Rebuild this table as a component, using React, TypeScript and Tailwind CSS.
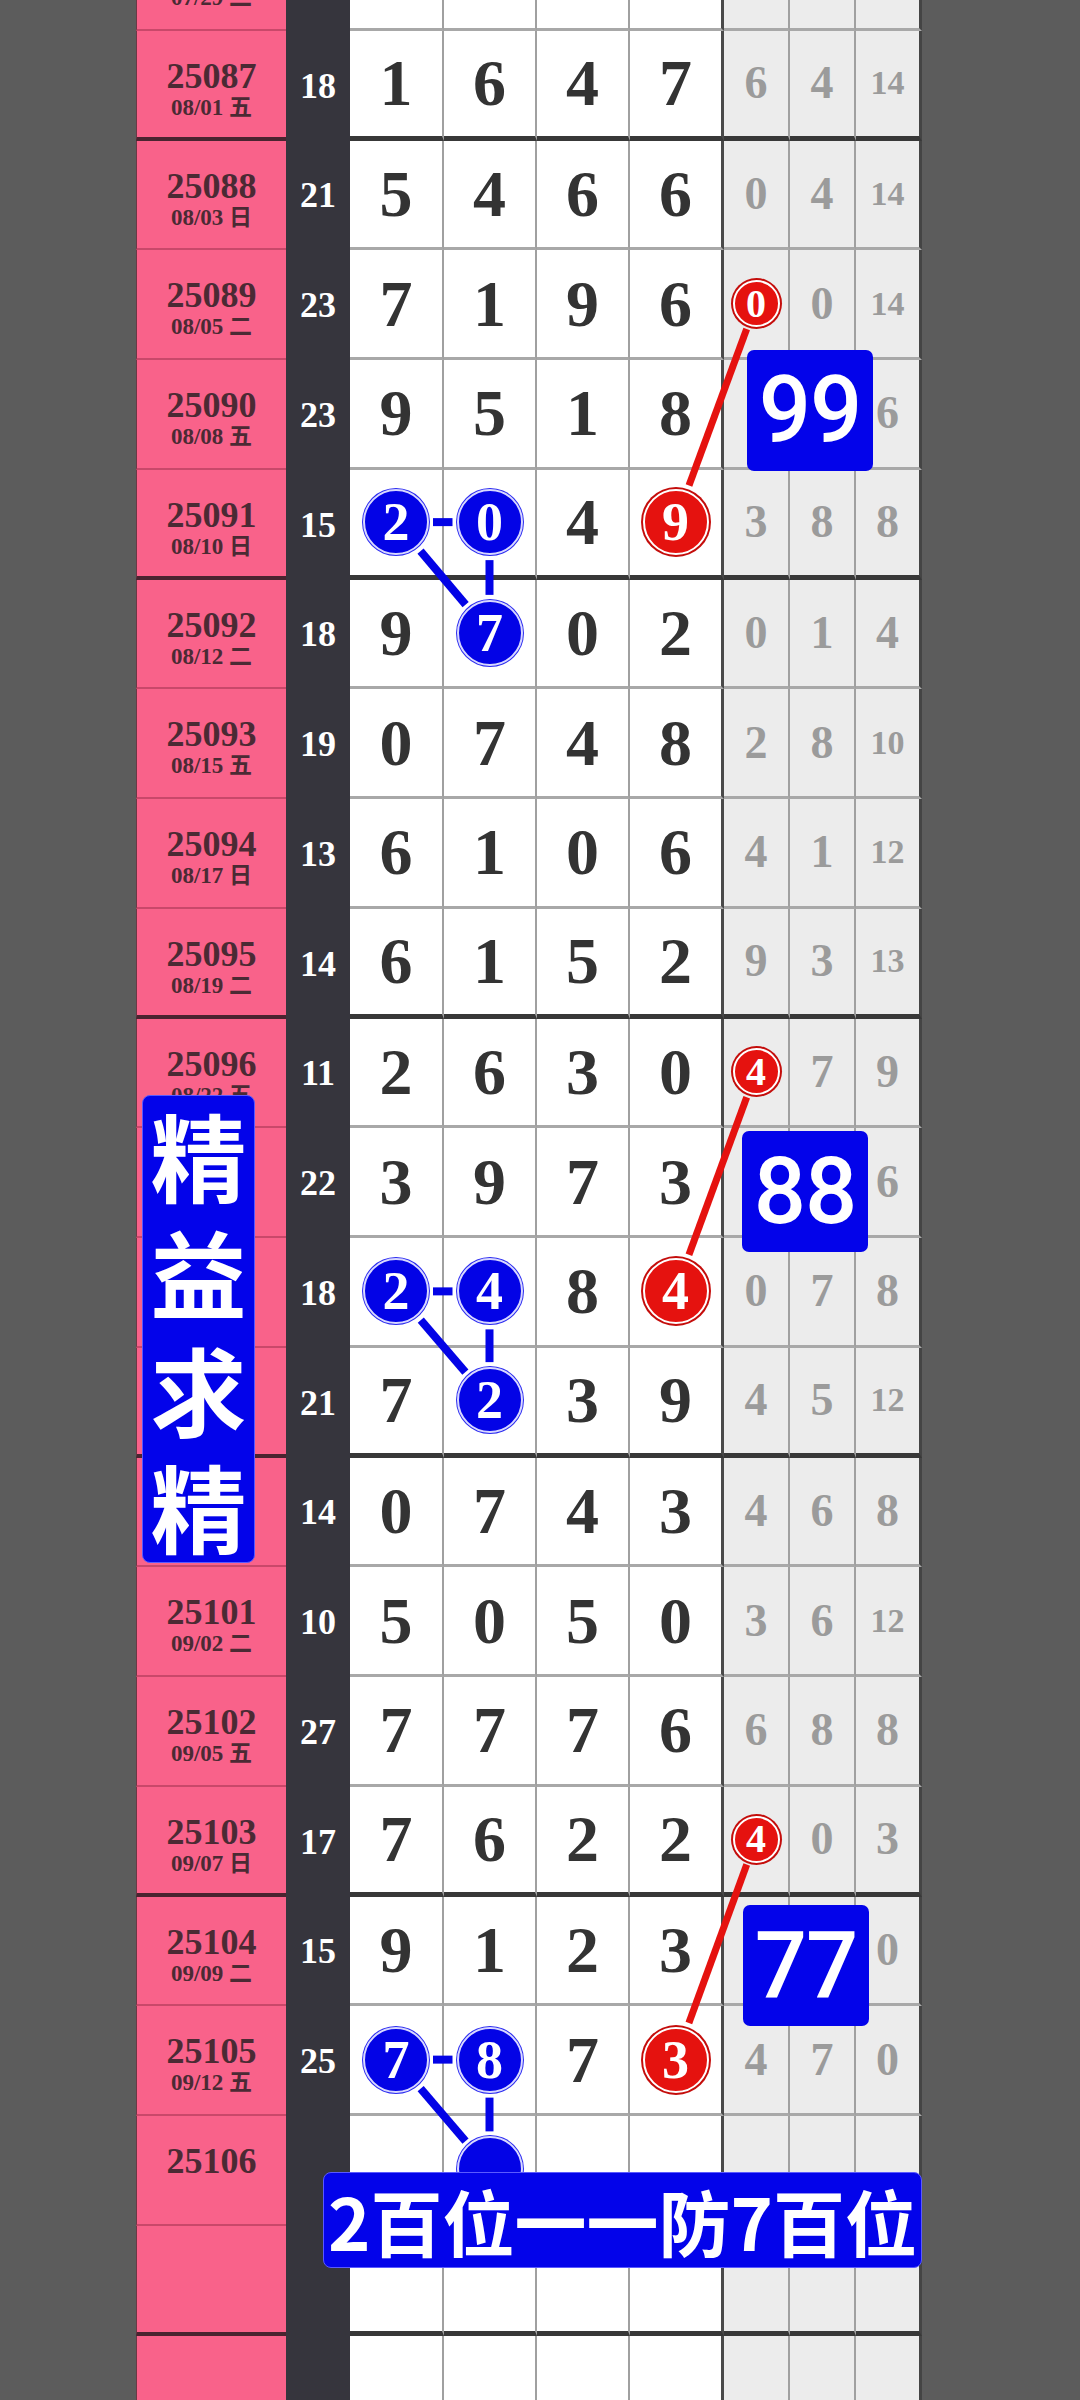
import React from "react";

type Row = {
  id: string;
  date: string;
  sum: string;
  main: string[];
  side: string[];
};

// "b" = 蓝圈, "r" = 红圈, 后面跟数字
// 25097-25100 的期号被“精益求精”挡住，截图里看不到，这里留空
const ROWS: Row[] = [
  { id: "25086", date: "07/29 二", sum: "", main: ["", "", "", ""], side: ["", "", ""] },
  { id: "25087", date: "08/01 五", sum: "18", main: ["1", "6", "4", "7"], side: ["6", "4", "14"] },
  { id: "25088", date: "08/03 日", sum: "21", main: ["5", "4", "6", "6"], side: ["0", "4", "14"] },
  { id: "25089", date: "08/05 二", sum: "23", main: ["7", "1", "9", "6"], side: ["r0", "0", "14"] },
  { id: "25090", date: "08/08 五", sum: "23", main: ["9", "5", "1", "8"], side: ["", "", "6"] },
  { id: "25091", date: "08/10 日", sum: "15", main: ["b2", "b0", "4", "r9"], side: ["3", "8", "8"] },
  { id: "25092", date: "08/12 二", sum: "18", main: ["9", "b7", "0", "2"], side: ["0", "1", "4"] },
  { id: "25093", date: "08/15 五", sum: "19", main: ["0", "7", "4", "8"], side: ["2", "8", "10"] },
  { id: "25094", date: "08/17 日", sum: "13", main: ["6", "1", "0", "6"], side: ["4", "1", "12"] },
  { id: "25095", date: "08/19 二", sum: "14", main: ["6", "1", "5", "2"], side: ["9", "3", "13"] },
  { id: "25096", date: "08/22 五", sum: "11", main: ["2", "6", "3", "0"], side: ["r4", "7", "9"] },
  { id: "", date: "", sum: "22", main: ["3", "9", "7", "3"], side: ["", "", "6"] },
  { id: "", date: "", sum: "18", main: ["b2", "b4", "8", "r4"], side: ["0", "7", "8"] },
  { id: "", date: "", sum: "21", main: ["7", "b2", "3", "9"], side: ["4", "5", "12"] },
  { id: "", date: "", sum: "14", main: ["0", "7", "4", "3"], side: ["4", "6", "8"] },
  { id: "25101", date: "09/02 二", sum: "10", main: ["5", "0", "5", "0"], side: ["3", "6", "12"] },
  { id: "25102", date: "09/05 五", sum: "27", main: ["7", "7", "7", "6"], side: ["6", "8", "8"] },
  { id: "25103", date: "09/07 日", sum: "17", main: ["7", "6", "2", "2"], side: ["r4", "0", "3"] },
  { id: "25104", date: "09/09 二", sum: "15", main: ["9", "1", "2", "3"], side: ["", "", "0"] },
  { id: "25105", date: "09/12 五", sum: "25", main: ["b7", "b8", "7", "r3"], side: ["4", "7", "0"] },
  { id: "25106", date: "", sum: "", main: ["", "b", "", ""], side: ["", "", ""] },
  { id: "", date: "", sum: "", main: ["", "", "", ""], side: ["", "", ""] },
  { id: "", date: "", sum: "", main: ["", "", "", ""], side: ["", "", ""] },
];

const SERIF = "font-['Liberation_Serif','Noto_Sans_CJK_SC',serif] font-bold";

// 行的几何：顶部偏移 -79，行高 109.75，每 4 行一条粗线
const TOP = -79;
const RH = 109.75;
const thick = (k: number) => k % 4 === 1;
const rowCenter = (k: number) => TOP + k * RH + (thick(k) ? 52.375 : 53.375);
const COL = [396, 489.5, 583, 675.5];
const SIDE1 = 756;

function parse(v: string) {
  if (v[0] === "b" || v[0] === "r") return { mark: v[0], text: v.slice(1) };
  return { mark: "", text: v };
}

function Ball({ mark, text, small }: { mark: string; text: string; small?: boolean }) {
  const size = small ? "h-[47px] w-[47px] text-[40px]" : "h-[66px] w-[66px] text-[54px]";
  const color =
    mark === "b"
      ? "bg-[#0303e6] border-2 border-[#d8d8ff] shadow-[0_0_0_1px_#2a2af0]"
      : "bg-[#e5120f] border-2 border-white shadow-[0_0_0_2px_#c40d0b]";
  return (
    <div className={`${size} ${color} flex items-center justify-center rounded-full text-white leading-none ${SERIF}`}>
      {text}
    </div>
  );
}

function TableRow({ row, k }: { row: Row; k: number }) {
  const t = thick(k);
  const pinkB = t ? "border-b-[4px] border-b-[#4a2430]" : "border-b-2 border-b-[#c9486a]";
  const cellB = t ? "border-b-[5px] border-b-[#383838]" : "border-b-[3px] border-b-[#a8a8a8]";
  const widths = ["w-[94px]", "w-[93px]", "w-[93px]", "w-[94px]"];

  return (
    <div className="flex h-[109.75px]">
      <div
        className={`flex w-[150px] flex-col items-center border-l border-l-[#6a3a46] bg-[#f9628a] pt-[27px] text-[#4b2a34] ${pinkB} ${SERIF}`}
      >
        <div className="text-[36px] leading-[36px]">{row.id}</div>
        {row.date ? <div className="mt-[1px] text-[23px] leading-[26px]">{row.date}</div> : null}
      </div>
      <div className={`flex w-[64px] items-center justify-center bg-[#36353d] text-[36px] leading-none text-white ${SERIF}`}>
        {row.sum}
      </div>
      {row.main.map((v, i) => {
        const { mark, text } = parse(v);
        const right = i === 3 ? "border-r-[3px] border-r-[#4a4a4a]" : "border-r-2 border-r-[#a0a0a0]";
        return (
          <div key={i} className={`flex ${widths[i]} items-center justify-center bg-white ${right} ${cellB}`}>
            {mark ? (
              <Ball mark={mark} text={text} />
            ) : (
              <span className={`text-[66px] leading-none text-[#333333] ${SERIF}`}>{text}</span>
            )}
          </div>
        );
      })}
      {row.side.map((v, i) => {
        const { mark, text } = parse(v);
        const right = i === 2 ? "border-r-[3px] border-r-[#444444]" : "border-r-2 border-r-[#a0a0a0]";
        const size = text.length > 1 ? "text-[34px]" : "text-[46px]";
        return (
          <div key={i} className={`flex w-[66px] items-center justify-center bg-[#ececec] ${right} ${cellB}`}>
            {mark ? (
              <Ball mark={mark} text={text} small />
            ) : (
              <span className={`${size} leading-none text-[#9b9b9b] ${SERIF}`}>{text}</span>
            )}
          </div>
        );
      })}
    </div>
  );
}

function seg(x1: number, y1: number, r1: number, x2: number, y2: number, r2: number) {
  const dx = x2 - x1;
  const dy = y2 - y1;
  const d = Math.hypot(dx, dy);
  const ux = dx / d;
  const uy = dy / d;
  return { x1: x1 + ux * r1, y1: y1 + uy * r1, x2: x2 - ux * r2, y2: y2 - uy * r2 };
}

function Links() {
  // 每组：蓝圈在第 k 行（百位/十位），下一行十位；红线从上两行的小红圈到个位
  const groups = [5, 12, 19];
  return (
    <svg className="pointer-events-none absolute left-0 top-0" width={1080} height={2400}>
      {groups.map((k) => {
        const y = rowCenter(k);
        const y2 = rowCenter(k + 1);
        const ys = rowCenter(k - 2);
        const lines = [
          seg(COL[0], y, 37, COL[1], y, 37),
          seg(COL[1], y, 38, COL[1], y2, 38),
          seg(COL[0], y, 38, COL[1], y2, 37),
        ];
        const red = seg(SIDE1, ys, 27, COL[3], y, 39);
        return (
          <g key={k}>
            {lines.map((l, i) => (
              <line key={i} {...l} stroke="#0303e6" strokeWidth={8} />
            ))}
            <line {...red} stroke="#e5120f" strokeWidth={7} />
          </g>
        );
      })}
    </svg>
  );
}

function NumBox({ text, className }: { text: string; className: string }) {
  return (
    <div
      className={`absolute flex h-[121px] w-[126px] items-center justify-center rounded-[7px] bg-[#0303ea] font-['Roboto',sans-serif] text-[92px] font-medium leading-none tracking-[-1px] text-white ${className}`}
    >
      {text}
    </div>
  );
}

export default function App() {
  return (
    <div className="relative h-[2400px] w-[1080px] overflow-hidden bg-[#5c5c5c]">
      <div className="ml-[136px] mt-[-79px] w-[786px]">
        {ROWS.map((row, k) => (
          <TableRow key={k} row={row} k={k} />
        ))}
      </div>

      <Links />

      <NumBox text="99" className="left-[747px] top-[350px]" />
      <NumBox text="88" className="left-[742px] top-[1131px]" />
      <NumBox text="77" className="left-[743px] top-[1905px]" />

      <div className="absolute left-[142px] top-[1095px] flex h-[468px] w-[113px] flex-col items-center justify-center rounded-[8px] border border-[#5a5aff] bg-[#0303ea] font-['Noto_Sans_CJK_SC',sans-serif] text-[96px] font-bold leading-[117px] text-white">
        {"精益求精".split("").map((c, i) => (
          <div key={i}>{c}</div>
        ))}
      </div>

      <div className="absolute left-[323px] top-[2172px] flex h-[96px] w-[599px] items-center justify-center rounded-[8px] border border-[#5a5aff] bg-[#0303ea] font-['Noto_Sans_CJK_SC',sans-serif] text-[72px] font-bold leading-none text-white">
        2百位一一防7百位
      </div>
    </div>
  );
}
